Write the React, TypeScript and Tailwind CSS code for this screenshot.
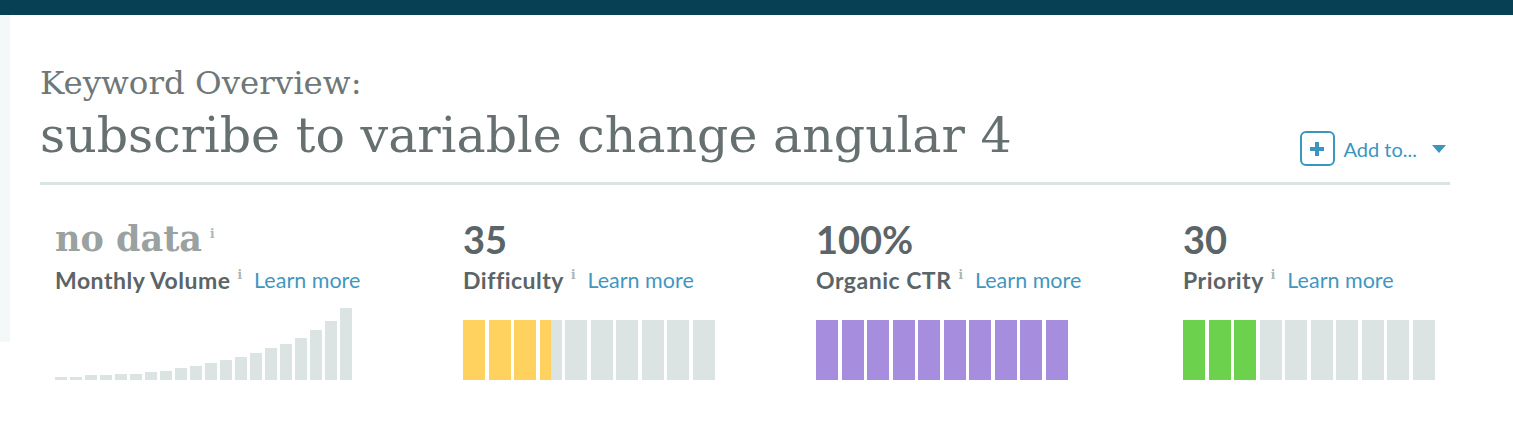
import React from "react";

const volume = [3, 3, 5, 5, 6, 6, 8, 9, 12, 14, 17, 20, 23, 27, 32, 36, 42, 50, 59, 72];

function Info({ className = "" }: { className?: string }) {
  return (
    <span
      className={`inline-block font-['DejaVu_Serif',serif] text-[12px] font-bold leading-none text-[#adb4b4] ${className}`}
    >
      i
    </span>
  );
}

function Segments({ value, fill }: { value: number; fill: string }) {
  return (
    <div className="grid h-[60px] w-[252px] grid-cols-10 gap-[3.5px]">
      {Array.from({ length: 10 }).map((_, i) => {
        const part = Math.max(0, Math.min(1, value - i));
        return (
          <div key={i} className="h-full overflow-hidden bg-[#dce3e3]">
            <div className={`h-full ${fill}`} style={{ width: `${part * 100}%` }} />
          </div>
        );
      })}
    </div>
  );
}

function Metric({
  value,
  label,
  width,
  muted = false,
  children,
}: {
  value: string;
  label: string;
  width: string;
  muted?: boolean;
  children: React.ReactNode;
}) {
  return (
    <div className={`flex shrink-0 flex-col ${width}`}>
      <div className="flex h-[40px] items-start">
        {muted ? (
          <span className="font-['DejaVu_Serif',serif] text-[35px] font-bold leading-[40px] text-[#9aa1a1]">
            {value}
          </span>
        ) : (
          <span className="text-[38px] font-bold leading-[40px] text-[#5b6466]">{value}</span>
        )}
        {muted && <Info className="ml-[8px] mt-[9px]" />}
      </div>
      <div className="mt-[7px] flex h-[28px] items-start whitespace-nowrap leading-[28px]">
        <span className="text-[23px] font-bold tracking-[0.5px] text-[#5b6466]">{label}</span>
        <Info className="ml-[7px] mt-[3px]" />
        <a href="#" className="ml-[12px] text-[21.5px] text-[#3f97c0]">
          Learn more
        </a>
      </div>
      <div className="mt-[14px] flex h-[72px] items-end">{children}</div>
    </div>
  );
}

export default function App() {
  return (
    <div className="min-h-[439px] bg-white font-['Lato',sans-serif]">
      <div className="h-[15px] bg-[#074055]" />
      <div className="flex">
        <div className="h-[327px] w-[10px] shrink-0 bg-[#f5f8f8]" />
        <div className="w-[1440px] pl-[30px] pt-[46px]">
          <h1 className="font-['DejaVu_Serif',serif] text-[32.5px] font-light leading-[44px] text-[#6f7778]">
            Keyword Overview:
          </h1>
          <div className="mt-[5px] flex items-end justify-between border-b-[3px] border-[#dce3e3] pb-[20px]">
            <h2 className="font-['DejaVu_Serif',serif] text-[49px] font-light leading-[52px] text-[#677071]">
              subscribe to variable change angular 4
            </h2>
            <button className="mb-[-4px] mr-[4px] flex items-center text-[#3a96bf]">
              <span className="flex h-[35px] w-[35px] items-center justify-center rounded-[6px] border-2 border-[#3a96bf]">
                <svg width="14" height="14" viewBox="0 0 14 14">
                  <path d="M5 0h4v5h5v4H9v5H5V9H0V5h5z" fill="#3a96bf" />
                </svg>
              </span>
              <span className="ml-[9px] text-[20px] leading-none">Add to...</span>
              <svg className="ml-[15px]" width="14" height="8" viewBox="0 0 14 8">
                <path d="M0 0h14L7 8z" fill="#3a96bf" />
              </svg>
            </button>
          </div>

          <div className="mt-[34px] flex pl-[15px]">
            <Metric value="no data" label="Monthly Volume" width="w-[408px]" muted>
              <div className="flex items-end gap-[3px]">
                {volume.map((h, i) => (
                  <div key={i} className="w-[12px] bg-[#dce3e3]" style={{ height: `${h}px` }} />
                ))}
              </div>
            </Metric>
            <Metric value="35" label="Difficulty" width="w-[353px]">
              <Segments value={3.5} fill="bg-[#ffd15f]" />
            </Metric>
            <Metric value="100%" label="Organic CTR" width="w-[367px]">
              <Segments value={10} fill="bg-[#a68ddd]" />
            </Metric>
            <Metric value="30" label="Priority" width="w-[260px]">
              <Segments value={3} fill="bg-[#6cd24e]" />
            </Metric>
          </div>
        </div>
      </div>
    </div>
  );
}
